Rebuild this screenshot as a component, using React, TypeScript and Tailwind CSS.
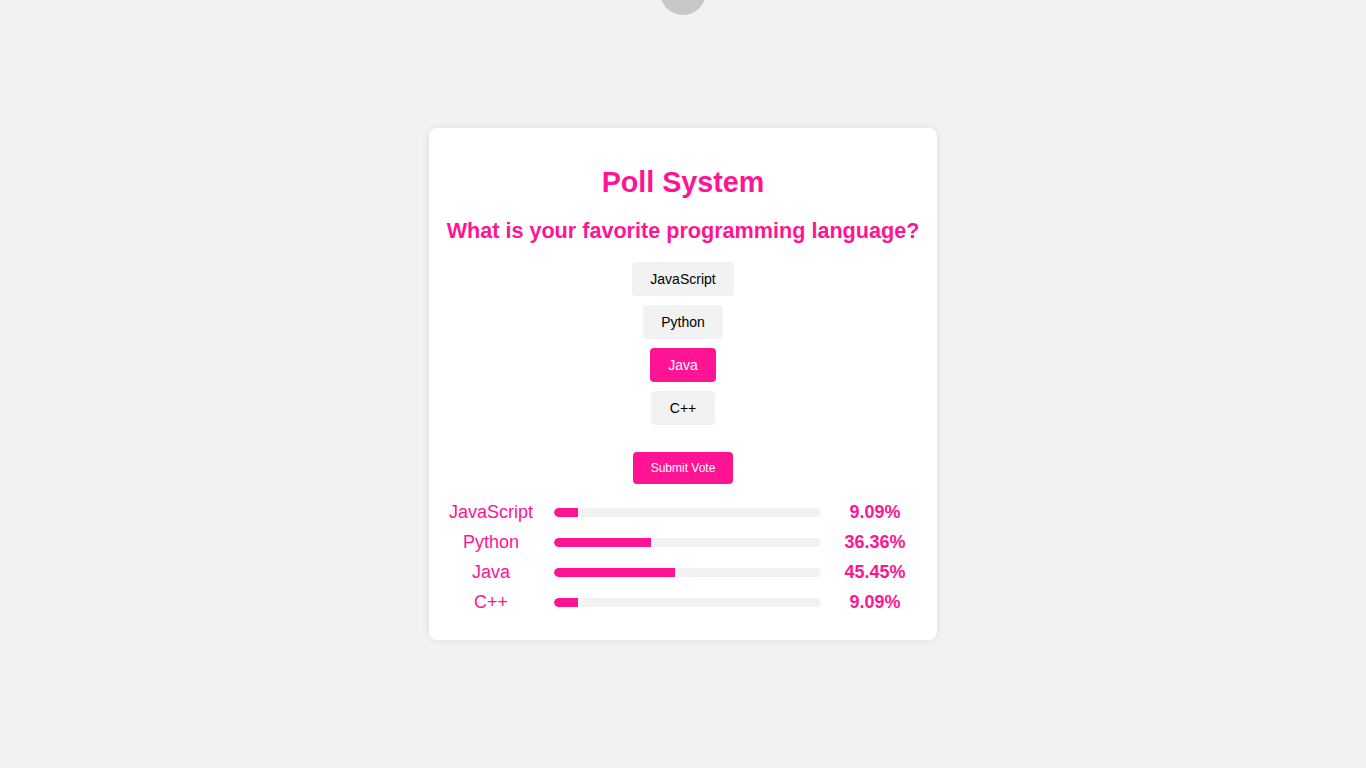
import { useState } from "react";

const OPTIONS = ["JavaScript", "Python", "Java", "C++"];

const RESULTS = [
    { label: "JavaScript", pct: 9.09 },
    { label: "Python", pct: 36.36 },
    { label: "Java", pct: 45.45 },
    { label: "C++", pct: 9.09 },
];

export default function App() {
    const [selected, setSelected] = useState("Java");

    return (
        <div className="relative flex min-h-screen items-center justify-center overflow-hidden bg-[#f2f2f2] font-['Liberation_Sans',Arial,sans-serif]">
            {/* grey blob peeking in at the top */}
            <div className="absolute left-1/2 top-[-31px] h-[46px] w-[46px] -translate-x-1/2 rounded-full bg-[#c8c8ca]" />

            <div className="w-[508px] rounded-lg bg-white px-[18px] pt-[38px] pb-[29px] text-center shadow-[0_0_8px_rgba(0,0,0,0.08)]">
                <h1 className="text-[28.7px] font-bold leading-[32px] text-[#ff1493]">Poll System</h1>
                <h2 className="mt-[20px] flex justify-center whitespace-nowrap text-[21.6px] font-bold leading-[26px] text-[#ff1493]">
                    <span>What is your favorite programming language?</span>
                </h2>

                <div className="mt-[18px] flex flex-col items-center gap-[9px]">
                    {OPTIONS.map((opt) => (
                        <button
                            key={opt}
                            onClick={() => setSelected(opt)}
                            className={
                                opt === selected
                                    ? "h-[34px] rounded px-[18.5px] text-[14px] text-white bg-[#ff1493]"
                                    : "h-[34px] rounded px-[18.5px] text-[14px] text-black bg-[#f2f2f2]"
                            }
                        >
                            {opt}
                        </button>
                    ))}
                </div>

                <button className="mt-[27px] h-[32px] rounded bg-[#ff1493] px-[18px] text-[12px] text-white">
                    Submit Vote
                </button>

                <div className="mt-[19px] flex flex-col gap-[12px]">
                    {RESULTS.map((r) => (
                        <div key={r.label} className="flex h-[18px] items-center">
                            <span className="w-[88px] shrink-0 text-center text-[18px] leading-[18px] text-[#ff1493]">{r.label}</span>
                            <div className="ml-[19px] h-[9px] w-[267px] shrink-0 overflow-hidden rounded-full bg-[#f2f2f2]">
                                <div className="h-full rounded-l-full bg-[#ff1493]" style={{ width: `${r.pct}%` }} />
                            </div>
                            <span className="ml-[11px] w-[86px] shrink-0 text-center text-[18px] font-bold leading-[18px] text-[#ff1493]">
                                {r.pct.toFixed(2)}%
                            </span>
                        </div>
                    ))}
                </div>
            </div>
        </div>
    );
}
